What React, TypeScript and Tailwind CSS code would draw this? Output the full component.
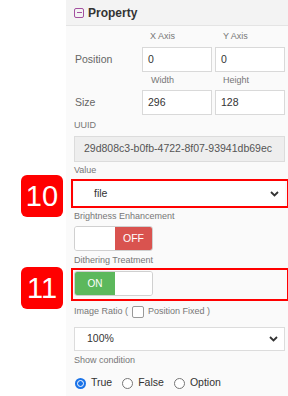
import React from "react";

const font = { fontFamily: '"Liberation Sans", Arial, sans-serif' };

function Chevron() {
  return (
    <svg width="9" height="6" viewBox="0 0 9 6" className="shrink-0">
      <polyline points="1,1 4.5,4.5 8,1" fill="none" stroke="#333" strokeWidth="1.8" />
    </svg>
  );
}

function Radio({ checked, label }: { checked?: boolean; label: string }) {
  return (
    <div className="flex items-center gap-[5px]">
      {checked ? (
        <span className="w-[11px] h-[11px] rounded-full bg-[#1a73e8] flex items-center justify-center">
          <span className="w-[7px] h-[7px] rounded-full bg-[#1a73e8] border-[1.5px] border-white" />
        </span>
      ) : (
        <span className="w-[11px] h-[11px] rounded-full border border-[#767676] bg-white" />
      )}
      <span className="text-[10.5px] text-[#333]">{label}</span>
    </div>
  );
}

export default function App() {
  return (
    <div className="relative w-[288px] h-[396px] bg-white flex overflow-hidden" style={font}>
      <div className="w-[66px] shrink-0 bg-white" />
      <div className="flex-1 flex flex-col bg-[#fafafa]">
        <div className="h-[26px] bg-[#f3f3f3] border-b border-[#e4e4e4] flex items-center pl-[8px] gap-[4px]">
          <span className="w-[10px] h-[10px] rounded-[2px] border-[1.5px] border-[#a3509f] flex items-center justify-center">
            <span className="w-[5px] h-[1.5px] bg-[#a3509f]" />
          </span>
          <span className="text-[12px] font-bold text-[#333]">Property</span>
        </div>
        <div className="pl-[8px] pr-[5px] flex flex-col">
          <div className="h-[21px] grid grid-cols-[65px_70px_70px] gap-x-[3px] items-center">
            <span />
            <span className="pl-[8px] text-[9px] text-[#777]">X Axis</span>
            <span className="pl-[8px] text-[9px] text-[#777]">Y Axis</span>
          </div>
          <div className="h-[25px] grid grid-cols-[65px_70px_70px] gap-x-[3px] items-center">
            <span className="pl-[1px] text-[10.5px] text-[#666]">Position</span>
            <div className="h-[25px] border border-[#d9d9d9] bg-white flex items-center pl-[5px] text-[10.5px] text-[#333]">0</div>
            <div className="h-[25px] border border-[#d9d9d9] bg-white flex items-center pl-[5px] text-[10.5px] text-[#333]">0</div>
          </div>
          <div className="h-[18px] grid grid-cols-[65px_70px_70px] gap-x-[3px] items-center">
            <span />
            <span className="pl-[9px] text-[9px] text-[#777]">Width</span>
            <span className="pl-[8px] text-[9px] text-[#777]">Height</span>
          </div>
          <div className="h-[25px] grid grid-cols-[65px_70px_70px] gap-x-[3px] items-center">
            <span className="pl-[1px] text-[10.5px] text-[#666]">Size</span>
            <div className="h-[25px] border border-[#d9d9d9] bg-white flex items-center pl-[5px] text-[10.5px] text-[#333]">296</div>
            <div className="h-[25px] border border-[#d9d9d9] bg-white flex items-center pl-[5px] text-[10.5px] text-[#333]">128</div>
          </div>
          <div className="h-[21px] flex items-center text-[9px] text-[#777]">UUID</div>
          <div className="h-[26px] border border-[#dcdcdc] bg-[#eeeeee] flex items-center pl-[9px] text-[10.5px] text-[#555] whitespace-nowrap overflow-hidden">
            29d808c3-b0fb-4722-8f07-93941db69ec
          </div>
          <div className="h-[17px] flex items-end pb-[2px] text-[9px] text-[#777]">Value</div>
          <div className="-ml-[3px] -mr-[4px] h-[29px] border-2 border-[#ff0000] pl-[1px] pr-[2px] flex items-center">
            <div className="flex-1 h-[25px] bg-white flex items-center justify-between pl-[20px] pr-[6px]">
              <span className="text-[10.5px] text-[#333]">file</span>
              <Chevron />
            </div>
          </div>
          <div className="h-[18px] flex items-center text-[9px] text-[#777]">Brightness Enhancement</div>
          <div className="w-[79px] h-[25px] flex border border-[#d0d0d0] rounded-[3px] overflow-hidden">
            <div className="w-[40px] bg-white" />
            <div className="flex-1 bg-[#d9534f] flex items-center justify-center text-[10.5px] text-white">OFF</div>
          </div>
          <div className="h-[17px] flex items-end pb-[1px] text-[9px] text-[#777]">Dithering Treatment</div>
          <div className="-ml-[3px] -mr-[4px] h-[33px] border-2 border-[#ff0000] pl-[1px] pt-[1px]">
            <div className="w-[79px] h-[25px] flex border border-[#d0d0d0] rounded-[3px] overflow-hidden">
              <div className="w-[40px] bg-[#5cb85c] flex items-center justify-center text-[10px] text-white">ON</div>
              <div className="flex-1 bg-white" />
            </div>
          </div>
          <div className="h-[26px] flex items-center pb-[4px] text-[9px] text-[#777] whitespace-nowrap">
            <span>Image Ratio (</span>
            <span className="mx-[4px] w-[12px] h-[12px] border border-[#999] rounded-[2px] bg-white" />
            <span>Position Fixed )</span>
          </div>
          <div className="h-[24px] border border-[#dcdcdc] bg-white flex items-center justify-between pl-[12px] pr-[6px]">
            <span className="text-[10.5px] text-[#333]">100%</span>
            <Chevron />
          </div>
          <div className="h-[20px] flex items-center text-[9px] text-[#777]">Show condition</div>
          <div className="h-[24px] flex items-center gap-[10px] pl-[1px]">
            <Radio checked label="True" />
            <Radio label="False" />
            <Radio label="Option" />
          </div>
        </div>
      </div>
      <div className="absolute left-[21px] top-[175px] w-[42px] h-[42px] rounded-[6px] bg-[#ff0000] flex items-center justify-center text-white text-[29px] leading-none">
        10
      </div>
      <div className="absolute left-[21px] top-[267px] w-[42px] h-[42px] rounded-[6px] bg-[#ff0000] flex items-center justify-center text-white text-[29px] leading-none">
        11
      </div>
    </div>
  );
}
